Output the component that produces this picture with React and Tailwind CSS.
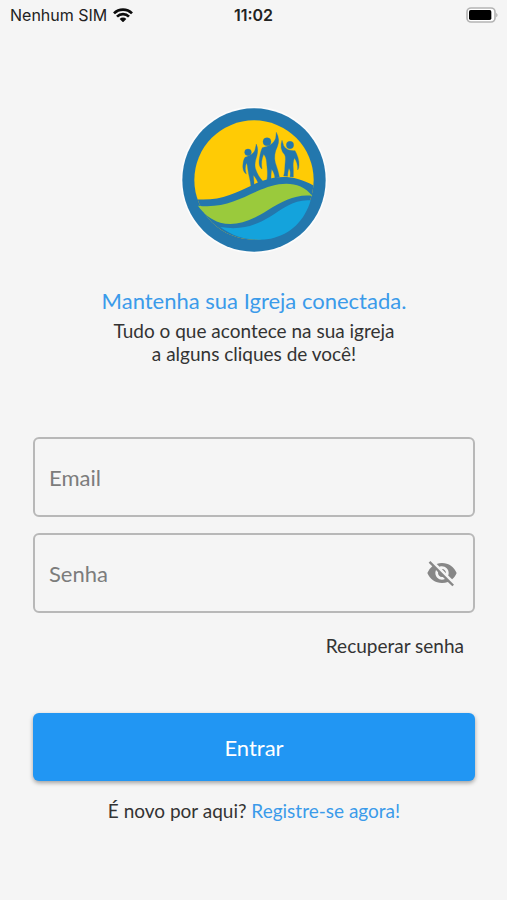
import { useState } from "react";
import { MdVisibility, MdVisibilityOff } from "react-icons/md";

function WifiIcon() {
  return (
    <svg viewBox="0 0 60 42" className="h-[14px] w-5" fill="none" stroke="#0c0c0c" aria-hidden="true">
      <path d="M3 16 A38 38 0 0 1 57 16" strokeWidth="8" />
      <path d="M12 26 A25 25 0 0 1 48 26" strokeWidth="8" />
      <path d="M30 43 L20 33 A14 14 0 0 1 40 33 Z" fill="#0c0c0c" stroke="none" />
    </svg>
  );
}

function BatteryIcon() {
  return (
    <svg viewBox="0 0 99 48" className="h-4 w-[33px]" aria-hidden="true">
      <rect x="3" y="3" width="84" height="42" rx="12" fill="#fff" stroke="#b4b4b4" strokeWidth="5" />
      <rect x="9" y="9" width="67" height="30" rx="5" fill="#000" />
      <path d="M91 17 Q98 24 91 31 Z" fill="#a5a5a5" />
    </svg>
  );
}

function Logo() {
  return (
    <svg viewBox="18 17 444 444" className="size-[148px]" role="img" aria-label="Igreja">
      <defs>
        <clipPath id="disc">
          <circle cx="240" cy="239" r="179" />
        </clipPath>
      </defs>
      <circle cx="240" cy="239" r="220" fill="#fcfcfc" />
      <circle cx="240" cy="239" r="215" fill="#2377ad" />
      <g clipPath="url(#disc)">
        <rect x="50" y="50" width="380" height="380" fill="#ffcb05" />
        <path d="M50 295 C130 307 180 279 238 253 C290 229 350 213 430 262 V430 H50 Z" fill="#2377ad" />
      </g>
      <path
        d="M72 316 C145 325 196 297 249 273 C304 247 374 233 415 287 C370 280 326 302 281 330 C226 366 180 378 139 367 C110 358 87 338 72 316 Z"
        fill="#9aca3c"
      />
      <path
        d="M410 300 C360 296 326 326 288 349 C240 378 198 390 139 380 C187 416 238 423 290 415 C350 403 393 360 410 300 Z"
        fill="#14a3dc"
      />
      <g fill="#2377ad" stroke="#2377ad" strokeWidth="1">
        <circle cx="222" cy="156" r="10" />
        <path d="M213 171 C227 166 239 160 243 149 L247 131 Q254 146 249 165 C245 180 241 190 244 204 C250 222 258 234 267 243 L253 249 C248 238 244 230 238 225 C239 237 241 246 240 257 L231 260 C230 242 224 226 222 210 C220 199 221 194 217 188 C214 197 212 208 217 221 C208 215 205 204 207 191 C208 182 210 176 213 171 Z" />
        <circle cx="279" cy="124" r="12" />
        <path d="M265 142 C284 139 300 129 305 114 L307 96 Q319 119 310 139 C302 154 300 172 304 187 C310 205 314 217 316 230 L303 234 C302 223 298 213 293 207 C291 218 291 228 291 238 L278 243 C283 221 279 204 278 187 C277 175 274 167 269 162 C263 176 261 190 264 206 C254 198 254 186 257 170 C259 158 261 150 265 142 Z" />
        <circle cx="348" cy="134" r="11" />
        <path d="M324 120 L329 136 C336 149 351 151 363 151 C370 163 376 180 375 194 Q375 204 371 209 C372 193 367 181 361 173 C357 184 357 193 358 207 L358 230 L348 229 C350 218 349 210 345 204 C342 213 341 220 341 228 L329 227 C333 215 332 205 333 194 C334 181 336 170 332 163 Q315 146 324 120 Z" />
      </g>
    </svg>
  );
}

export default function App() {
  const [email, setEmail] = useState("");
  const [password, setPassword] = useState("");
  const [visible, setVisible] = useState(false);

  return (
    <div className="min-h-screen bg-[#f5f5f5] font-['Lato',sans-serif] text-[#333333]">
      <header className="grid h-[30px] grid-cols-3 items-center px-2 font-['Inter',sans-serif] text-base text-[#222222]">
        <div className="flex items-center gap-[6px] pl-[2px] whitespace-nowrap">
          <span>Nenhum SIM</span>
          <WifiIcon />
        </div>
        <span className="text-center font-semibold">11:02</span>
        <div className="flex justify-end">
          <BatteryIcon />
        </div>
      </header>

      <main className="flex flex-col pt-[76px] pr-8 pb-8 pl-[33px]">
        <div className="flex flex-col items-center text-center">
          <Logo />
          <h1 className="mt-[33px] text-[22px] leading-7 text-[#3b9bea]">Mantenha sua Igreja conectada.</h1>
          <p className="mt-1 text-[19px] leading-[23px]">
            Tudo o que acontece na sua igreja
            <br />a alguns cliques de você!
          </p>
        </div>

        <form className="mt-[72px] flex flex-col" onSubmit={(e) => e.preventDefault()}>
          <input
            type="email"
            aria-label="Email"
            placeholder="Email"
            value={email}
            onChange={(e) => setEmail(e.target.value)}
            className="h-20 w-full rounded-md border-2 border-[#b8b8b8] bg-transparent px-[14px] text-[22px] outline-none placeholder:text-[#7c7c7c] focus:border-[#2196f3]"
          />
          <div className="mt-4 flex h-20 items-center rounded-md border-2 border-[#b8b8b8] pr-[15px] focus-within:border-[#2196f3]">
            <input
              type={visible ? "text" : "password"}
              aria-label="Senha"
              placeholder="Senha"
              value={password}
              onChange={(e) => setPassword(e.target.value)}
              className="h-full min-w-0 flex-1 bg-transparent px-[14px] text-[22px] outline-none placeholder:text-[#7c7c7c]"
            />
            <button
              type="button"
              aria-label={visible ? "Ocultar senha" : "Mostrar senha"}
              onClick={() => setVisible(!visible)}
              className="text-[#878787]"
            >
              {visible ? <MdVisibility className="size-8" /> : <MdVisibilityOff className="size-8" />}
            </button>
          </div>
          <a href="#recuperar" className="mt-[19px] mr-[11px] self-end text-[19px] leading-7">
            Recuperar senha
          </a>
          <button
            type="submit"
            className="mt-[53px] h-[68px] w-full rounded-md bg-[#2196f3] text-[22px] text-white shadow-[0_2px_4px_rgba(0,0,0,0.35)]"
          >
            Entrar
          </button>
        </form>

        <p className="mt-4 text-center text-[19px] leading-7">
          É novo por aqui?{" "}
          <a href="#registro" className="text-[#3b9bea]">
            Registre-se agora!
          </a>
        </p>
      </main>
    </div>
  );
}
